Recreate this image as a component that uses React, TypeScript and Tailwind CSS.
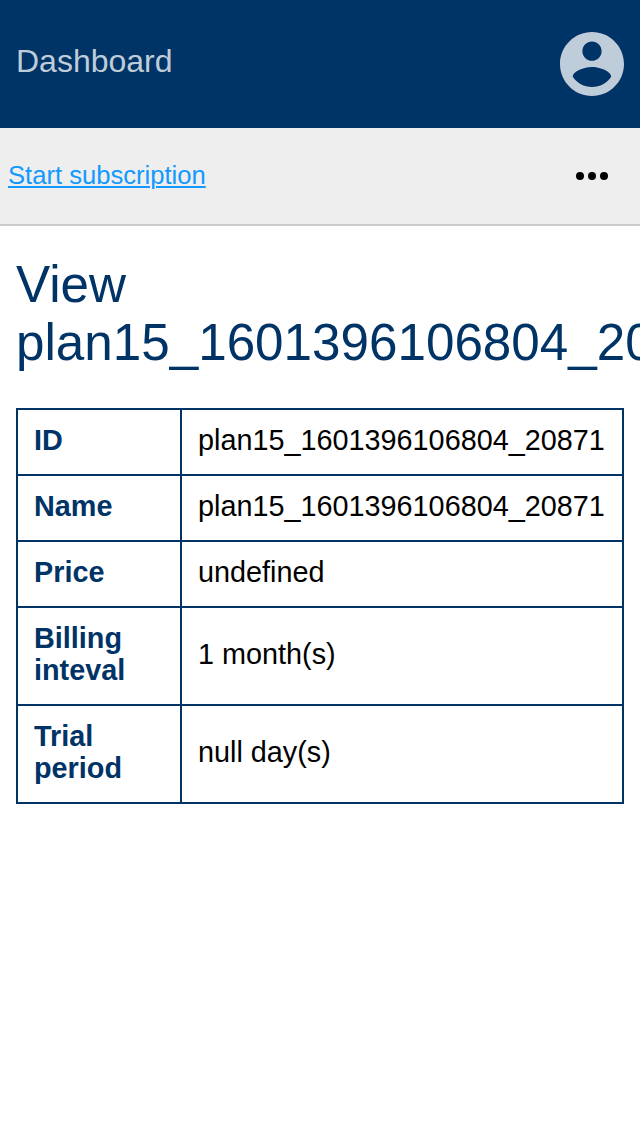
const rows = [
  { label: "ID", value: "plan15_1601396106804_20871", size: "h-[66px]" },
  { label: "Name", value: "plan15_1601396106804_20871", size: "h-[66px]" },
  { label: "Price", value: "undefined", size: "h-[66px]" },
  { label: "Billing inteval", value: "1 month(s)", size: "h-[98px]" },
  { label: "Trial period", value: "null day(s)", size: "h-[98px]" },
];

function AccountIcon() {
  return (
    <svg viewBox="2 2 20 20" className="size-16 fill-[#bfccd9]" aria-label="Account">
      <path d="M12 2C6.48 2 2 6.48 2 12s4.48 10 10 10 10-4.48 10-10S17.52 2 12 2zm0 3c1.66 0 3 1.34 3 3s-1.34 3-3 3-3-1.34-3-3 1.34-3 3-3zm0 14.2c-2.5 0-4.71-1.28-6-3.22.03-1.99 4-3.08 6-3.08 1.99 0 5.97 1.09 6 3.08-1.29 1.94-3.5 3.22-6 3.22z" />
    </svg>
  );
}

export default function App() {
  return (
    <div className="h-[1136px] w-[640px] overflow-hidden bg-white font-['Liberation_Sans',Arial,sans-serif] text-black">
      <header className="flex h-32 items-center justify-between bg-[#003366] px-4">
        <span className="pb-1.5 text-[32px] leading-9 text-[#bfccd9]">Dashboard</span>
        <AccountIcon />
      </header>
      <nav className="flex h-[98px] items-center justify-between border-b-2 border-[#cccccc] bg-[#eeeeee] pr-8 pl-2">
        <a href="#" className="pb-0.5 text-[25.6px] leading-8 text-[#1199ff] underline decoration-2 underline-offset-2">Start subscription</a>
        <svg viewBox="0 0 32 8" className="h-2 w-8" aria-label="More">
          <circle cx="4" cy="4" r="4" />
          <circle cx="16" cy="4" r="4" />
          <circle cx="28" cy="4" r="4" />
        </svg>
      </nav>
      <main className="px-4 pt-[30px]">
        <h1 className="text-[51.2px] leading-[58px] text-[#003366]">View plan15_1601396106804_20871</h1>
        <table className="mt-9 w-[608px] table-fixed border-collapse text-[28.8px] leading-8">
          <tbody>
            {rows.map((row) => (
              <tr key={row.label} className={row.size}>
                <th className="w-[164px] border-2 border-[#003366] px-4 pt-0 pb-1 text-left font-bold text-[#003366]">{row.label}</th>
                <td className="border-2 border-[#003366] px-4 pt-0 pb-1">{row.value}</td>
              </tr>
            ))}
          </tbody>
        </table>
      </main>
    </div>
  );
}
